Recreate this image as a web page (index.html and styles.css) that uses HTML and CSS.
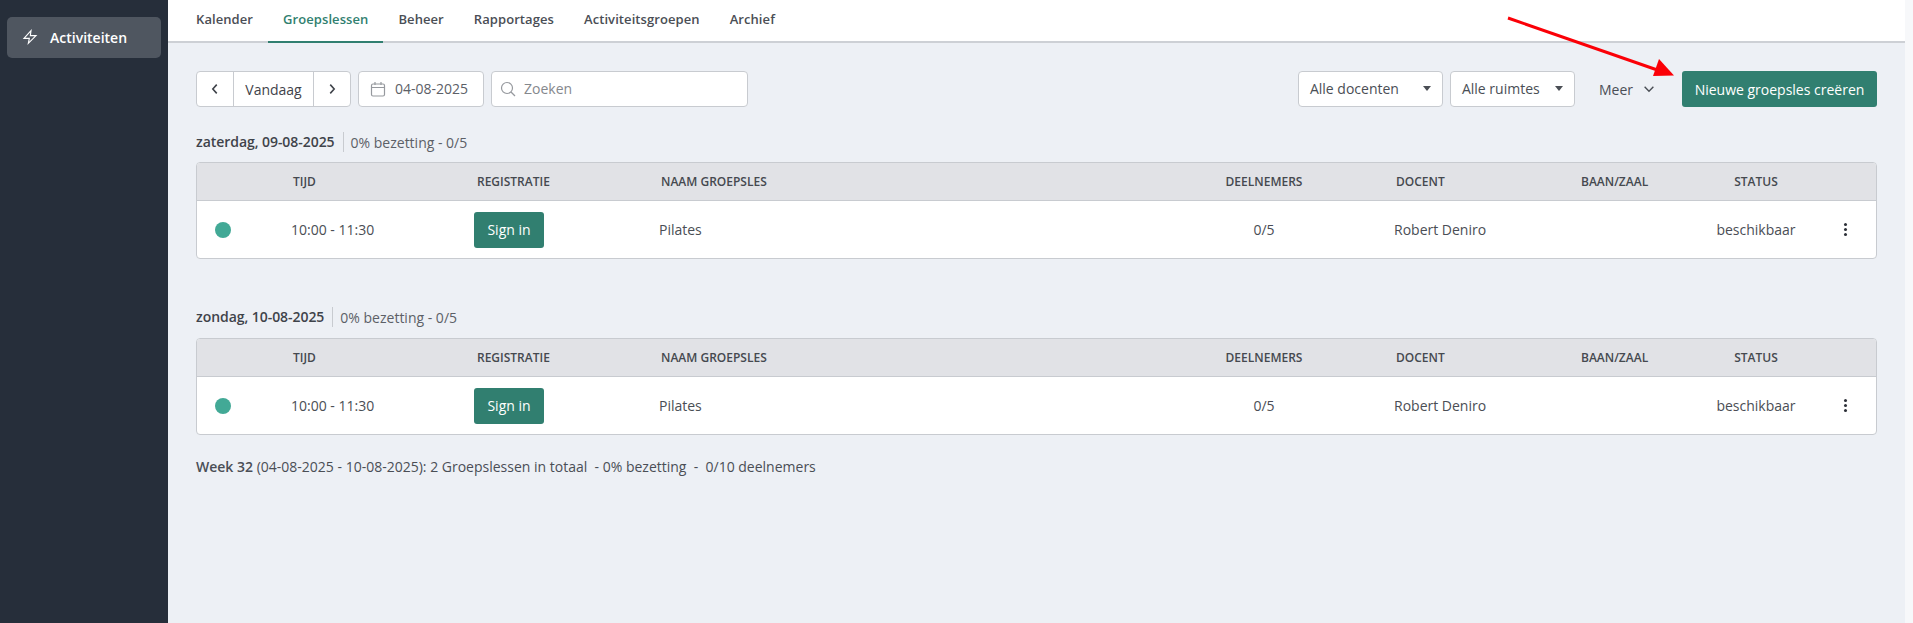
FILE: index.html
```html
<!DOCTYPE html>
<html lang="nl">
<head>
  <meta charset="UTF-8" />
  <title>Groepslessen</title>
  <link rel="stylesheet" href="styles.css">
</head>
<body>
  <aside class="sidebar">
    <a class="side-item">
      <svg class="side-icon" viewBox="0 0 24 24"><path d="M13.500 2.500 3 14h8l-1.500 7.500L21 10h-8.500z"/></svg>
      Activiteiten
    </a>
  </aside>

  <div class="main">
    <nav class="tabs">
      <a class="tab">Kalender</a>
      <a class="tab active">Groepslessen</a>
      <a class="tab">Beheer</a>
      <a class="tab">Rapportages</a>
      <a class="tab">Activiteitsgroepen</a>
      <a class="tab">Archief</a>
    </nav>

    <div class="content">
      <div class="toolbar">
        <div class="nav-group">
          <button class="nav-btn"><svg viewBox="0 0 16 16"><path d="M10 3 5.500 8l4.500 5"/></svg></button>
          <button class="nav-today">Vandaag</button>
          <button class="nav-btn"><svg viewBox="0 0 16 16"><path d="m6 3 4.500 5L6 13"/></svg></button>
        </div>
        <div class="field date-field">
          <svg class="field-icon" viewBox="0 0 16 16"><rect x="1.500" y="3" width="13" height="12" rx="1.500"/><path d="M1.500 6.500h13M5 1v3M11 1v3"/></svg>
          04-08-2025
        </div>
        <div class="field search-field">
          <svg class="field-icon" viewBox="0 0 16 16"><circle cx="7" cy="7" r="5.500"/><path d="m11 11 4 4"/></svg>
          Zoeken
        </div>
        <div class="toolbar-right">
          <div class="field select docenten">Alle docenten<span class="caret"></span></div>
          <div class="field select ruimtes">Alle ruimtes<span class="caret"></span></div>
          <div class="meer">Meer <svg viewBox="0 0 16 16"><path d="m3 5.500 5 5 5-5"/></svg></div>
          <button class="btn-primary new-btn">Nieuwe groepsles creëren</button>
        </div>
      </div>

      <section class="day">
        <div class="day-head"><strong>zaterdag, 09-08-2025</strong><span>0% bezetting - 0/5</span></div>
        <div class="lesson-table">
          <div class="lesson-row head">
            <div></div>
            <div class="pad">TIJD</div>
            <div class="pad-reg">REGISTRATIE</div>
            <div class="pad">NAAM GROEPSLES</div>
            <div class="center">DEELNEMERS</div>
            <div class="pad">DOCENT</div>
            <div class="pad">BAAN/ZAAL</div>
            <div class="center">STATUS</div>
            <div></div>
          </div>
          <div class="lesson-row body">
            <div class="dot-cell"><span class="dot"></span></div>
            <div>10:00 - 11:30</div>
            <div><button class="btn-primary sign-btn">Sign in</button></div>
            <div>Pilates</div>
            <div class="center">0/5</div>
            <div>Robert Deniro</div>
            <div></div>
            <div class="center">beschikbaar</div>
            <div class="kebab"><i></i><i></i><i></i></div>
          </div>
        </div>
      </section>

      <section class="day">
        <div class="day-head"><strong>zondag, 10-08-2025</strong><span>0% bezetting - 0/5</span></div>
        <div class="lesson-table">
          <div class="lesson-row head">
            <div></div>
            <div class="pad">TIJD</div>
            <div class="pad-reg">REGISTRATIE</div>
            <div class="pad">NAAM GROEPSLES</div>
            <div class="center">DEELNEMERS</div>
            <div class="pad">DOCENT</div>
            <div class="pad">BAAN/ZAAL</div>
            <div class="center">STATUS</div>
            <div></div>
          </div>
          <div class="lesson-row body">
            <div class="dot-cell"><span class="dot"></span></div>
            <div>10:00 - 11:30</div>
            <div><button class="btn-primary sign-btn">Sign in</button></div>
            <div>Pilates</div>
            <div class="center">0/5</div>
            <div>Robert Deniro</div>
            <div></div>
            <div class="center">beschikbaar</div>
            <div class="kebab"><i></i><i></i><i></i></div>
          </div>
        </div>
      </section>

      <p class="week-total"><strong>Week 32</strong> (04-08-2025 - 10-08-2025): 2 Groepslessen in totaal&nbsp; - 0% bezetting&nbsp; -&nbsp; 0/10 deelnemers</p>
    </div>
  </div>

  <svg class="arrow" width="190" height="70" viewBox="0 0 190 70">
    <path class="arrow-line" d="M8 3 166 58"/>
    <path class="arrow-head" d="M174 60.500 153 61l6-17z"/>
  </svg>
</body>
</html>
```

FILE: styles.css
```css
* {
  box-sizing: border-box;
}
html, body {
  height: 100%;
}
body {
  margin: 0;
  display: flex;
  font-family: 'Open Sans', sans-serif;
  font-size: 14px;
  color: #3f434a;
  background: #edf0f5;
  overflow: hidden;
}
button {
  font-family: inherit;
  font-size: 14px;
  cursor: pointer;
}
svg path, svg rect, svg circle {
  fill: none;
  stroke: currentColor;
}
.sidebar {
  width: 168px;
  flex: none;
  background: #262e3a;
  padding: 17px 7px;
}
.side-item {
  display: flex;
  align-items: center;
  gap: 12px;
  height: 41px;
  padding: 0 0 1px 15px;
  border-radius: 5px;
  background: #4f5660;
  color: #fff;
  font-weight: 600;
}
.side-icon {
  width: 16px;
  height: 18px;
  stroke-width: 1.7;
  flex: none;
}
.main {
  flex: 1;
  min-width: 0;
  border-right: 8px solid #f7f8fa;
}
.tabs {
  display: flex;
  height: 43px;
  padding-left: 13px;
  background: #fff;
  border-bottom: 2px solid #cdd0d5;
}
.tab {
  height: 43px;
  padding: 10px 15px 0;
  font-weight: 600;
  font-size: 13px;
  letter-spacing: 0.08px;
  color: #4a4e55;
  border-bottom: 2px solid transparent;
}
.tab.active {
  color: #317f70;
  border-bottom-color: #317f70;
}
.content {
  padding: 28px 28px 0 28px;
}
.toolbar {
  display: flex;
  gap: 7px;
  height: 36px;
}
.nav-group {
  display: flex;
  width: 155px;
  background: #fff;
  border: 1px solid #c8cbd0;
  border-radius: 4px;
}
.nav-group button {
  background: none;
  border: none;
  padding: 0;
  color: #3f434a;
}
.nav-btn {
  display: flex;
  align-items: center;
  justify-content: center;
  width: 36px;
}
.nav-btn svg {
  width: 14px;
  height: 14px;
  stroke-width: 1.8;
}
.nav-today {
  flex: 1;
  border-left: 1px solid #c8cbd0 !important;
  border-right: 1px solid #c8cbd0 !important;
}
.field {
  display: flex;
  align-items: center;
  background: #fff;
  border: 1px solid #c8cbd0;
  border-radius: 4px;
  color: #5c6067;
  padding-bottom: 1px;
}
.field-icon {
  width: 16px;
  height: 16px;
  color: #96999e;
  stroke-width: 1.2;
  flex: none;
}
.date-field {
  width: 126px;
  padding-left: 11px;
  gap: 9px;
}
.search-field {
  width: 257px;
  padding-left: 8px;
  gap: 8px;
  color: #85888d;
}
.toolbar-right {
  display: flex;
  align-items: center;
  gap: 7px;
  margin-left: auto;
}
.select {
  justify-content: space-between;
  height: 36px;
  padding: 0 11px 1px;
  color: #4a4e55;
}
.docenten {
  width: 145px;
}
.ruimtes {
  width: 125px;
}
.caret {
  border-left: 4px solid transparent;
  border-right: 4px solid transparent;
  border-top: 5px solid #4a4e55;
}
.meer {
  display: flex;
  align-items: center;
  gap: 9px;
  margin: 0 19px 0 17px;
  color: #4a4e55;
}
.meer svg {
  width: 14px;
  height: 14px;
  stroke-width: 1.6;
}
.btn-primary {
  background: #317f70;
  color: #fff;
  border: none;
  border-radius: 3px;
}
.new-btn {
  width: 195px;
  height: 36px;
}
.day {
  margin-bottom: 48px;
}
.day-head {
  display: flex;
  align-items: center;
  height: 20px;
  margin: 25px 0 10px;
}
.day-head strong {
  font-weight: 600;
  padding-right: 8px;
  border-right: 1px solid #c8cbd0;
  line-height: 20px;
  letter-spacing: -0.05px;
}
.day-head span {
  padding-left: 7px;
  color: #5c6067;
}
.day + .day {
  margin-bottom: 0;
}
.day + .day .day-head {
  margin: 0 0 11px;
}
.lesson-table {
  border: 1px solid #c8cbd0;
  border-radius: 4px;
  overflow: hidden;
  background: #fff;
}
.lesson-row {
  display: grid;
  grid-template-columns: 94px 183px 185px 1fr 170px 185px 137px 118px 42px;
  align-items: center;
}
.lesson-row.head {
  height: 38px;
  background: #e1e2e6;
  border-bottom: 1px solid #c8cbd0;
  font-size: 12px;
  font-weight: 600;
  color: #45494f;
}
.lesson-row.body {
  height: 57px;
  color: #4a4e55;
}
.pad {
  padding-left: 2px;
}
.pad-reg {
  padding-left: 3px;
}
.center {
  width: 80px;
  text-align: center;
  white-space: nowrap;
}
.dot-cell {
  padding-left: 18px;
  display: flex;
}
.dot {
  width: 16px;
  height: 16px;
  border-radius: 50%;
  background: #42a996;
}
.sign-btn {
  display: block;
  width: 70px;
  height: 36px;
  padding: 0;
}
.kebab {
  display: flex;
  flex-direction: column;
  align-items: flex-start;
  gap: 2px;
  padding-left: 10px;
}
.kebab i {
  width: 3px;
  height: 3px;
  border-radius: 50%;
  background: #2c3038;
}
.week-total {
  margin: 22px 0 0;
  line-height: 20px;
  color: #4a4e55;
}
.week-total strong {
  font-weight: 600;
}
.arrow {
  position: absolute;
  left: 1500px;
  top: 15px;
}
.arrow-line {
  stroke: #fb0007;
  stroke-width: 3;
}
.arrow-head {
  fill: #fb0007;
  stroke: none;
}
```
